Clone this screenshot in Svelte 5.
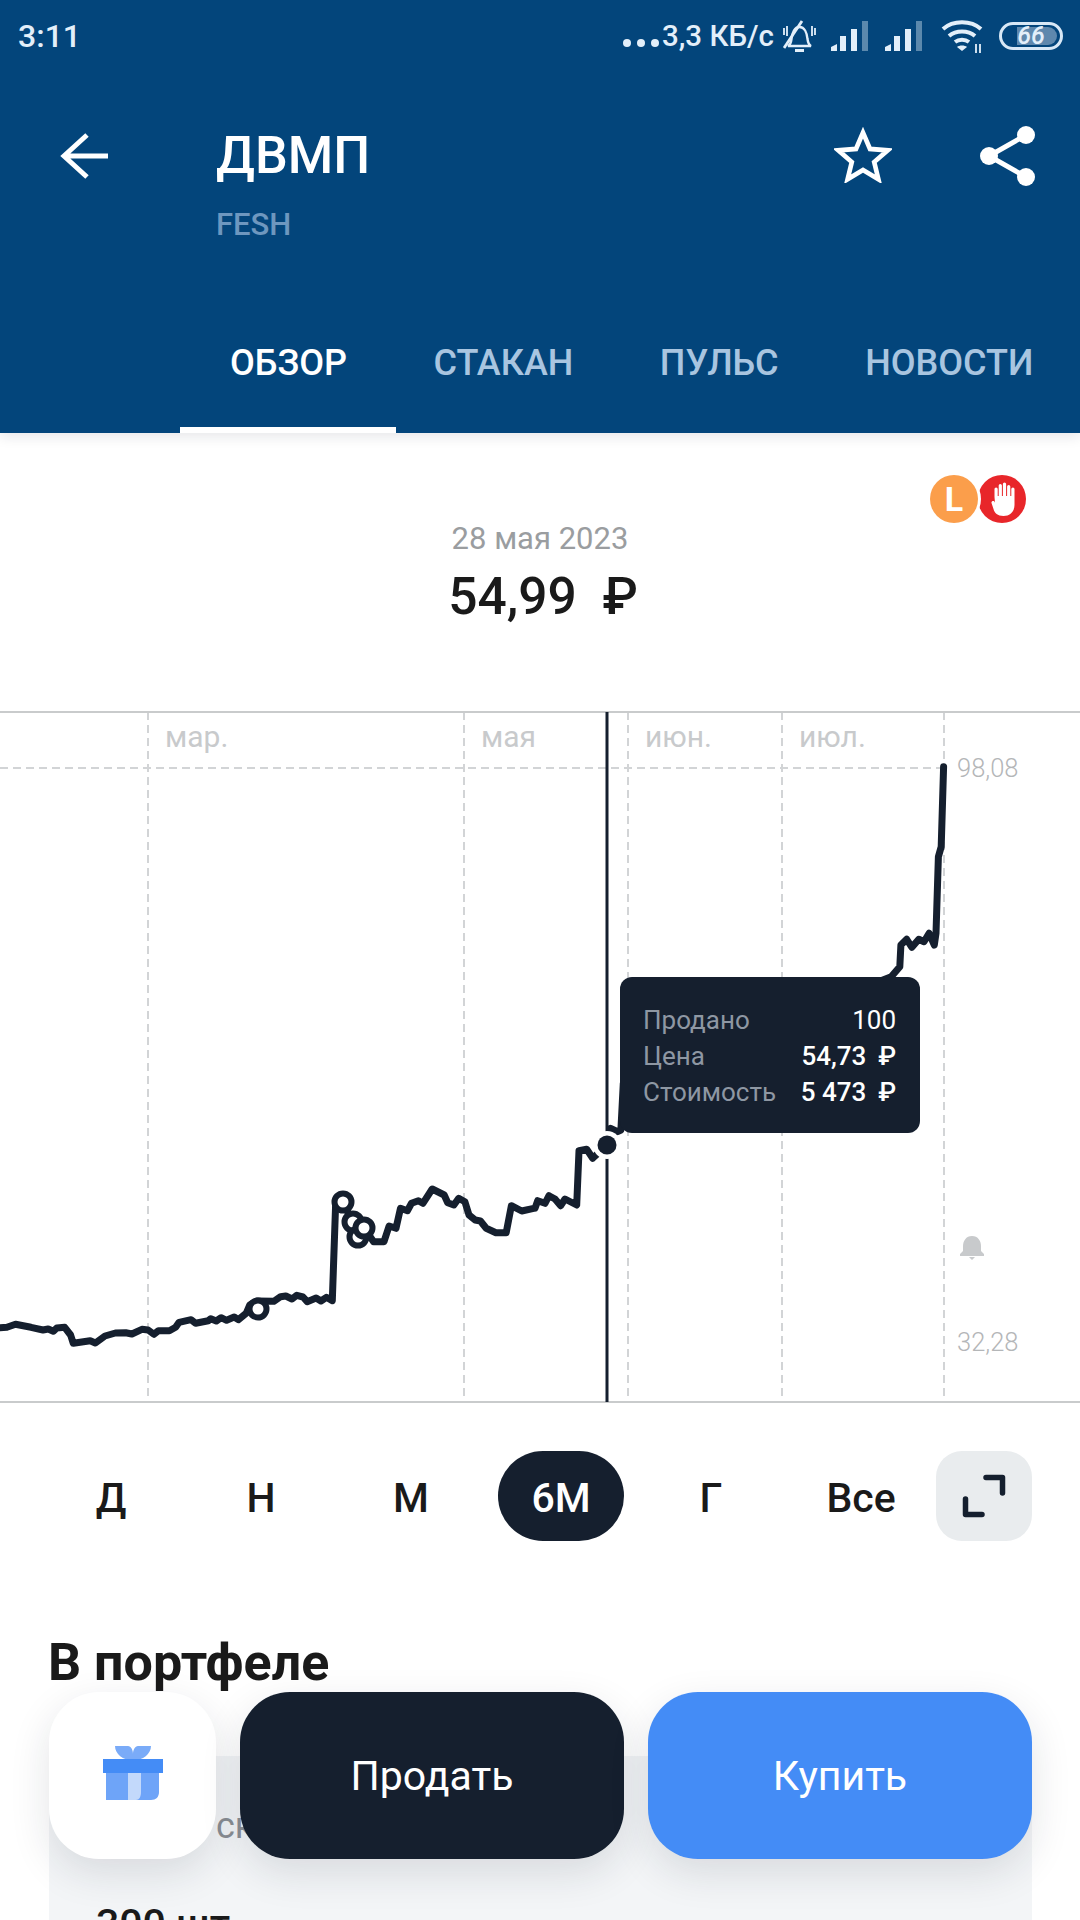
<script>
  const tabs = ['ОБЗОР', 'СТАКАН', 'ПУЛЬС', 'НОВОСТИ'];
  const ranges = ['Д', 'Н', 'М', '6М', 'Г', 'Все'];
  const months = [
    { x: 148, label: 'мар.' },
    { x: 464, label: 'мая' },
    { x: 628, label: 'июн.' },
    { x: 782, label: 'июл.' },
  ];

  // price line, read off in page pixels, chart starts at y=711
  const chartTop = 711;
  const left = [[0,683],[20,682],[45,673],[90,682],[125,690],[140,687],[155,694],[165,684],[188,682],[205,705],[213,730],[262,722],[277,729],[305,708],[335,699],[365,698],[383,702],[412,688],[430,690],[447,703],[460,692],[492,692],[510,682],[520,667],[555,659],[568,670],[605,662],[612,656],[628,663],[642,653],[658,661],[680,651],[692,659],[715,640],[725,615],[745,603],[795,604],[815,590],[830,588],[848,597],[862,586],[880,591],[892,605],[918,594],[932,603],[948,592],[965,602],[975,307],[995,307],[1025,365],[1040,410],[1057,383],[1085,425],[1115,425],[1130,378],[1150,385],[1163,325],[1183,332],[1195,310],[1215,302],[1228,310],[1255,267],[1290,285],[1300,308],[1318,315],[1332,295],[1350,305],[1362,345],[1380,360],[1395,363],[1412,385],[1440,398],[1470,398],[1485,317],[1515,333],[1550,325]]
    .map(([x, y]) => [x / 2.904, 1100 + y / 3]);
  const middle = [[405,385],[413,362],[435,370],[447,347],[465,357],[482,377],[495,357],[530,375],[537,212],[560,208],[578,235]]
    .map(([x, y]) => [400 + x / 3, 1080 + y / 3]);
  const right = [[205,1285],[225,1295],[235,1290],[242,1150],[600,1000],[1020,830],[1045,800],[1048,735],[1065,718],[1080,742],[1100,718],[1115,725],[1130,700],[1145,735],[1150,700],[1157,470],[1165,440],[1172,200]]
    .map(([x, y]) => [540 + x / 2.904, 700 + y / 3]);

  const line = [...left, ...middle, [607, 1145], ...right]
    .map(([x, y]) => `${x.toFixed(1)},${(y - chartTop).toFixed(1)}`)
    .join(' ');

  const markers = [[258, 598], [353, 511], [358, 526], [364, 517], [343, 491]];

  const tooltip = [
    { label: 'Продано', value: '100' },
    { label: 'Цена', value: '54,73\u00a0\u2009₽', strong: true },
    { label: 'Стоимость', value: '5 473\u00a0\u2009₽', strong: true },
  ];
</script>

<div class="screen">
  <header class="header">
    <div class="status">
      <span class="time">3:11</span>
      <div class="status-right">
        <svg class="dots" width="36" height="12" viewBox="0 0 36 12">
          <circle cx="4" cy="6" r="4" /><circle cx="18" cy="6" r="4" /><circle cx="32" cy="6" r="4" />
        </svg>
        <span class="speed">3,3 КБ/с</span>
        <svg class="muted" width="33" height="33" viewBox="0 0 33 33" fill="none" stroke="#e3effa" stroke-width="2.4">
          <path d="M5 26c2-1 3-3 3.500-7 .5-6 3-12 8-12 5 0 7.500 6 8 12 .5 4 1.500 6 3.500 7z" />
          <path d="M12 30.500h9" stroke-width="3" />
          <path d="M1 28 19 1" stroke-width="2.800" />
          <path d="M1 8v7M4 6v10M32 8v7M29 6v10" stroke-width="1.800" />
        </svg>
        <svg class="signal" width="40" height="30" viewBox="0 0 40 30">
          <path d="M0 30v-4l6-3v7z" fill="#e3effa" />
          <rect x="9" y="15" width="6" height="15" fill="#e3effa" />
          <rect x="20" y="8" width="6" height="22" fill="#e3effa" />
          <rect x="31" y="0" width="6" height="30" fill="#e3effa" opacity="0.4" />
        </svg>
        <svg class="signal" width="40" height="30" viewBox="0 0 40 30">
          <path d="M0 30v-4l6-3v7z" fill="#e3effa" />
          <rect x="9" y="15" width="6" height="15" fill="#e3effa" />
          <rect x="20" y="8" width="6" height="22" fill="#e3effa" />
          <rect x="31" y="0" width="6" height="30" fill="#e3effa" opacity="0.4" />
        </svg>
        <svg class="wifi" width="42" height="34" viewBox="0 0 42 34" fill="none" stroke="#e3effa" stroke-width="4">
          <path d="M2 9C12 0 30 0 40 9" />
          <path d="M8 16c7-6 19-6 26 0" />
          <path d="M14 22c4-3 10-3 14 0" />
          <path d="M21 31l-5-4c2-2 8-2 10 0z" fill="#e3effa" stroke="none" />
          <path d="M35 24v9M39 24v9" stroke-width="1.800" />
        </svg>
        <svg class="battery" width="64" height="28" viewBox="0 0 64 28">
          <rect x="1.500" y="1.500" width="61" height="25" rx="12.500" fill="none" stroke="#d8e8f6" stroke-width="3" />
          <path d="M18 5h31a9 9 0 0 1 0 18H18z" fill="#5f88ad" />
          <text x="32" y="22" text-anchor="middle">66</text>
        </svg>
      </div>
    </div>

    <div class="toolbar">
      <svg class="back" width="48" height="48" viewBox="0 0 48 48" fill="none" stroke="#fff" stroke-width="5">
        <path d="M48 24H4M27 3 4 24l23 21" />
      </svg>
      <div class="title">
        <h1>ДВМП</h1>
        <div class="ticker">FESH</div>
      </div>
      <svg class="star" width="58" height="56" viewBox="0 0 62 60" fill="none" stroke="#fff" stroke-width="5">
        <path d="M31 6l7.500 17.500 19 1.500-14.500 12.500 4.500 18.500L31 46l-16.500 10L19 37.500 4.500 25l19-1.500z" />
      </svg>
      <svg class="share" width="60" height="64" viewBox="0 0 60 64" fill="#fff">
        <circle cx="48" cy="11" r="9" /><circle cx="11" cy="32" r="9" /><circle cx="48" cy="53" r="9" />
        <path d="M48 11 11 32l37 21" fill="none" stroke="#fff" stroke-width="5" />
      </svg>
    </div>

    <nav class="tabs">
      {#each tabs as tab, i}
        <span class="tab" class:active={i === 0}>{tab}</span>
      {/each}
    </nav>
  </header>

  <section class="quote">
    <div class="badges">
      <span class="badge orange">L</span>
      <span class="badge red">
        <svg width="25" height="34" viewBox="0 0 25 34" fill="#fff">
          <path d="M4.500 15V7a1.600 1.600 0 0 1 3.200 0v7h1V3.500a1.600 1.600 0 0 1 3.200 0V14h1V2a1.600 1.600 0 0 1 3.200 0v12h1V4.500a1.600 1.600 0 0 1 3.200 0V14h1V7a1.600 1.600 0 0 1 3.200 0v16c0 6-4 11-11 11-6 0-9-3-10-7l-2-6c-.5-2 3-3 3.500 0z" />
        </svg>
      </span>
    </div>
    <div class="date">28 мая 2023</div>
    <div class="price">54,99&nbsp; ₽</div>
  </section>

  <div class="chart">
    <svg width="1080" height="693" viewBox="0 0 1080 693">
      <path class="grid" d="M0 57H944" />
      {#each months as m}
        <path class="grid" d="M{m.x} 1V691" />
        <text class="month" x={m.x + 17} y="36">{m.label}</text>
      {/each}
      <path class="grid" d="M944 1V691" />
      <path class="axis" d="M0 1H1080M0 691H1080" />

      <text class="level" x="957" y="66">98,08</text>
      <text class="level" x="957" y="640">32,28</text>
      <path class="bell" d="M972 525c-6 0-9 5-9 10v5l-3 3v2h24v-2l-3-3v-5c0-5-3-10-9-10zM969 546h6l-3 3z" />

      <path class="cursor" d="M607 1V691" />
      <polyline class="price-line" points={line} />
      {#each markers as [x, y]}
        <circle class="marker" cx={x} cy={y} r="8.500" />
      {/each}
      <circle cx="607" cy="434" r="14" fill="#fff" />
      <circle cx="607" cy="434" r="9.500" fill="#151f2e" />
    </svg>

    <div class="tooltip">
      {#each tooltip as row}
        <div class="tip-row">
          <span class="tip-label">{row.label}</span>
          <span class="tip-value" class:strong={row.strong}>{row.value}</span>
        </div>
      {/each}
    </div>
  </div>

  <div class="ranges">
    {#each ranges as r}
      <span class="range" class:active={r === '6М'}>{r}</span>
    {/each}
    <span class="expand">
      <svg width="96" height="90" viewBox="0 0 96 90" fill="none" stroke="#151f2e" stroke-width="5.500" stroke-linecap="round" stroke-linejoin="round">
        <path d="M50 26.500h16.500V42M29.500 48v15.500H46" />
      </svg>
    </span>
  </div>

  <h2 class="section-title">В портфеле</h2>

  <div class="card">
    <div class="card-label">ск</div>
    <div class="card-value">300 шт</div>
  </div>

  <div class="actions">
    <button class="action gift" aria-label="Подарок">
      <svg width="60" height="60" viewBox="0 0 60 60">
        <path d="M12 0h13c3 0 5 4 5 8 0-4 2-8 5-8h13c0 8-8 14-18 15-10-1-18-7-18-15z" fill="#7aabf8" />
        <path d="M3 24h53v22c0 5-3 8-8 8H3z" fill="#6ea4f8" />
        <path d="M25 24h13v22c0 5-2 8-5 8h-8z" fill="#c3d9fb" />
        <rect x="0" y="13" width="60" height="14" fill="#448cf6" />
      </svg>
    </button>
    <button class="action sell">Продать</button>
    <button class="action buy">Купить</button>
  </div>
</div>

<style>
  :global(body) {
    margin: 0;
    background: #fff;
  }

  .screen {
    position: relative;
    width: 1080px;
    height: 1920px;
    overflow: hidden;
    font-family: Roboto, "Noto Sans", sans-serif;
    color: #1a1a1a;
    background: #fff;
  }

  .header {
    height: 433px;
    display: flex;
    flex-direction: column;
    background: #03457b;
    box-shadow: 0 4px 12px rgba(21, 31, 46, 0.1);
    position: relative;
  }

  .status {
    height: 72px;
    flex: none;
    display: flex;
    align-items: center;
    justify-content: space-between;
    padding: 0 17px 0 18px;
    color: #e3effa;
    box-sizing: border-box;
  }

  .time {
    font-size: 32px;
    font-weight: 500;
  }

  .status-right {
    display: flex;
    align-items: center;
  }

  .dots {
    fill: #e3effa;
    margin: 14px 3px 0 0;
  }

  .speed {
    font-size: 29.5px;
    font-weight: 500;
    width: 112px;
    white-space: nowrap;
  }

  .muted { margin-left: 9px; }
  .signal { margin-left: 14px; }
  .muted + .signal { margin-left: 15px; }
  .wifi { margin-left: 16px; margin-top: 2px; }
  .battery { margin-left: 16px; }

  .battery text {
    font-size: 25px;
    font-weight: 500;
    font-style: italic;
    fill: #e3effa;
  }

  .toolbar {
    display: flex;
    align-items: flex-start;
    padding: 56px 0 0 60px;
  }

  .back {
    margin-top: 4px;
    flex: none;
  }

  .title {
    margin-left: 108px;
    flex: 1;
    color: #fff;
  }

  h1 {
    margin: 0;
    font-size: 52px;
    line-height: 56px;
    font-weight: 500;
  }

  .ticker {
    margin-top: 25px;
    font-size: 31px;
    line-height: 32px;
    font-weight: 500;
    color: #6e97bf;
  }

  .star {
    margin: -1px 86px 0 0;
    flex: none;
  }

  .share {
    margin: -4px 42px 0 0;
    flex: none;
  }

  .tabs {
    margin-top: auto;
    display: flex;
    gap: 86.5px;
    padding: 0 0 50px 230px;
  }

  .tab {
    position: relative;
    font-size: 36px;
    line-height: 40px;
    font-weight: 500;
    color: #a9c5e0;
    white-space: nowrap;
  }

  .tab.active {
    color: #fff;
  }

  .tab.active::after {
    content: "";
    position: absolute;
    left: -50px;
    right: -49px;
    bottom: -50px;
    height: 6px;
    background: #fff;
  }

  .quote {
    height: 278px;
    box-sizing: border-box;
    padding-top: 88px;
    text-align: center;
    position: relative;
  }

  .badges {
    position: absolute;
    top: 42px;
    right: 54px;
    display: flex;
  }

  .badge {
    width: 48px;
    height: 48px;
    border-radius: 50%;
    display: flex;
    align-items: center;
    justify-content: center;
    color: #fff;
    font-weight: 700;
    font-size: 34px;
  }

  .orange {
    background: #fb9e4b;
    box-shadow: 0 0 0 3px #fff;
    position: relative;
    z-index: 1;
  }

  .red {
    background: #e8262a;
  }

  .date {
    font-size: 31px;
    line-height: 36px;
    color: #9a9da0;
  }

  .price {
    margin-top: 10px;
    padding-left: 6px;
    font-size: 51.5px;
    line-height: 60px;
    font-weight: 500;
  }

  .chart {
    position: relative;
    height: 693px;
  }

  .chart svg {
    display: block;
  }

  .grid {
    fill: none;
    stroke: #d2d4d6;
    stroke-width: 2;
    stroke-dasharray: 8 5;
  }

  .axis {
    fill: none;
    stroke: #c9cbcc;
    stroke-width: 2;
  }

  .month {
    font-size: 30px;
    fill: #c8cacc;
  }

  .level {
    font-size: 25.5px;
    font-weight: 300;
    fill: #b4b6b8;
  }

  .bell {
    fill: #c8cacc;
  }

  .cursor {
    fill: none;
    stroke: #151f2e;
    stroke-width: 3;
  }

  .price-line {
    fill: none;
    stroke: #151f2e;
    stroke-width: 7;
    stroke-linejoin: round;
    stroke-linecap: round;
  }

  .marker {
    fill: #fff;
    stroke: #151f2e;
    stroke-width: 6;
  }

  .tooltip {
    position: absolute;
    left: 620px;
    top: 266px;
    width: 300px;
    height: 156px;
    box-sizing: border-box;
    padding: 25px 24px 0 23px;
    background: #151f2e;
    border-radius: 12px;
  }

  .tip-row {
    display: flex;
    justify-content: space-between;
    font-size: 26px;
    line-height: 36px;
  }

  .tip-label {
    color: #8e97a3;
  }

  .tip-value {
    color: #fff;
  }

  .tip-value.strong {
    font-weight: 500;
  }

  .ranges {
    display: flex;
    align-items: flex-start;
    height: 90px;
    margin-top: 47px;
    padding-left: 36px;
  }

  .range {
    width: 150px;
    height: 90px;
    text-align: center;
    font-size: 41px;
    font-weight: 500;
    line-height: 94px;
    position: relative;
  }

  .range.active {
    color: #fff;
    z-index: 0;
  }

  .range.active::before {
    content: "";
    position: absolute;
    z-index: -1;
    top: 0;
    left: 12px;
    width: 126px;
    height: 90px;
    border-radius: 45px;
    background: #151f2e;
  }

  .expand {
    width: 96px;
    height: 90px;
    border-radius: 26px;
    background: #e9ecee;
  }

  .section-title {
    margin: 94px 0 0 48px;
    font-size: 52px;
    line-height: 56px;
    font-weight: 700;
    color: #1a1a1a;
  }

  .card {
    margin: 65px 48px 0 49px;
    height: 400px;
    box-sizing: border-box;
    padding: 50px 0 0 47px;
    background: #f3f5f7;
  }

  .card-label {
    margin-left: 120px;
    font-size: 36px;
    line-height: 40px;
    color: #8b8f94;
  }

  .card-value {
    margin-top: 54px;
    font-size: 41px;
    line-height: 48px;
    font-weight: 500;
  }

  .actions {
    position: absolute;
    left: 49px;
    right: 48px;
    top: 1692px;
    display: flex;
    gap: 24px;
  }

  .action {
    height: 167px;
    border: none;
    border-radius: 50px;
    font-family: inherit;
    font-size: 41px;
    color: #fff;
    box-shadow: 0 14px 40px rgba(21, 31, 46, 0.12);
    display: flex;
    align-items: center;
    justify-content: center;
    padding: 0;
  }

  .gift {
    width: 167px;
    flex: none;
    background: #fff;
  }

  .sell {
    flex: 1;
    background: #151f2e;
  }

  .buy {
    flex: 1;
    background: #448cf6;
  }
</style>
